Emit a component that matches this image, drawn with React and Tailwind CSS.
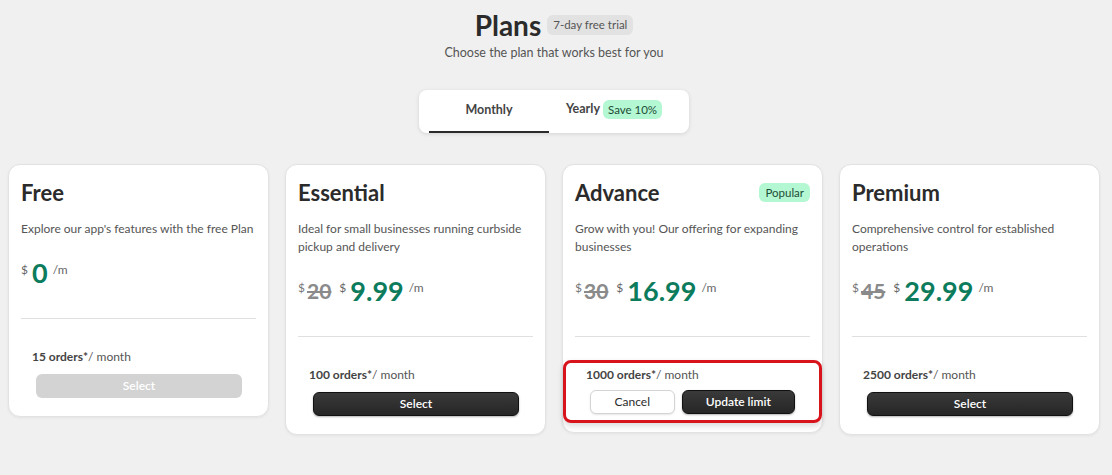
import { useState } from 'react';

const plans = [
    { name: 'Free', desc: "Explore our app's features with the free Plan", price: '0', orders: '15', disabled: true },
    { name: 'Essential', desc: 'Ideal for small businesses running curbside pickup and delivery', old: '20', price: '9.99', orders: '100' },
    { name: 'Advance', desc: 'Grow with you! Our offering for expanding businesses', old: '30', price: '16.99', orders: '1000', popular: true, current: true },
    { name: 'Premium', desc: 'Comprehensive control for established operations', old: '45', price: '29.99', orders: '2500' },
];

const darkBtn = 'h-6 rounded-md border border-[#111] bg-gradient-to-b from-[#3a3a3a] to-[#262626] text-[12px] font-semibold text-white shadow-[0_1px_2px_rgba(0,0,0,0.3)]';

const PlanCard = ({ plan }) => (
    <div className="w-[261px] shrink-0 rounded-xl border border-[#e2e2e2] bg-white pt-3 pb-[9px] shadow-[0_1px_3px_rgba(0,0,0,0.06)]">
        <div className="px-[12px]">
            <div className="flex items-center justify-between h-[32px]">
                <h2 className="text-[22px] font-bold text-[#2b2b2b]">{plan.name}</h2>
                {plan.popular && (
                    <span className="rounded-md bg-[#b4f7d3] px-[6px] py-[1px] text-[11.5px] text-[#1d4d36]">Popular</span>
                )}
            </div>
            <p className="mt-[11px] text-[12px] leading-[18px] text-[#555]">{plan.desc}</p>
            <div className="mt-[13px] flex items-center h-[44px] text-[#2b2b2b]">
                {plan.old && (
                    <>
                        <span className="self-start mt-[10px] text-[12px] text-[#777]">$</span>
                        <span className="ml-[2px] text-[21px] font-bold text-[#8a8a8a] line-through">{plan.old}</span>
                    </>
                )}
                <span className={`self-start mt-[10px] text-[12px] text-[#666] ${plan.old ? 'ml-[8px]' : ''}`}>$</span>
                <span className="ml-[4px] text-[27px] font-bold text-[#0c7c5c]">{plan.price}</span>
                <span className="self-start mt-[10px] ml-[5px] text-[12px] text-[#666]">/m</span>
            </div>
            <div className="mt-[23px] border-t border-[#e0e0e0]" />
        </div>
        <div
            className={`mt-[23px] rounded-lg border-[3px] px-[20px] pt-[3px] pb-[6px] ${plan.current ? 'border-[#d8131b] shadow-[0_3px_6px_rgba(0,0,0,0.15)]' : 'border-transparent'}`}
        >
            <div className="text-[12px] leading-[18px] text-[#555]">
                <span className="font-bold text-[#444]">{plan.orders} orders*</span>/ month
            </div>
            {plan.current ? (
                <div className="mt-[6px] flex gap-[7px] px-[4px]">
                    <button className="h-6 w-[85px] rounded-md border border-[#d4d4d4] bg-white text-[12px] text-[#2b2b2b] shadow-[0_1px_2px_rgba(0,0,0,0.1)]">Cancel</button>
                    <button className={`${darkBtn} w-[114px]`}>Update limit</button>
                </div>
            ) : plan.disabled ? (
                <div className="mt-[6px] px-[4px]">
                    <button className="h-6 w-[206px] rounded-md bg-[#d3d3d3] text-[12px] font-semibold text-white">Select</button>
                </div>
            ) : (
                <div className="mt-[6px] px-[4px]">
                    <button className={`${darkBtn} w-[206px]`}>Select</button>
                </div>
            )}
        </div>
    </div>
);

export default function App() {
    const [tab, setTab] = useState('monthly');

    return (
        <div className="min-h-[475px] bg-[#f0f0f0] pl-2 pr-3 pt-[10px] font-['Lato','Noto_Sans',sans-serif] text-[#2b2b2b]">
            <div className="flex flex-col items-center">
                <div className="flex items-center gap-[6px]">
                    <h1 className="text-[28px] font-bold leading-[30px] text-[#2b2b2b]">Plans</h1>
                    <span className="rounded-md bg-[#e2e2e2] px-[6px] py-[1px] text-[11.5px] text-[#555]">7-day free trial</span>
                </div>
                <p className="mt-[4px] text-[12.5px] text-[#555]">Choose the plan that works best for you</p>

                <div className="mt-[27px] flex h-[43px] w-[270px] rounded-lg bg-white px-[10px] shadow-[0_1px_4px_rgba(0,0,0,0.12)]">
                    <button
                        onClick={() => setTab('monthly')}
                        className={`w-[120px] text-[12.5px] font-bold text-[#444] ${tab === 'monthly' ? 'border-b-2 border-[#2b2b2b]' : ''}`}
                    >
                        Monthly
                    </button>
                    <button onClick={() => setTab('yearly')} className="flex flex-1 items-center justify-center gap-[3px] pb-[4px] text-[12.5px] font-bold text-[#444]">
                        Yearly
                        <span className="rounded-md bg-[#b4f7d3] px-[5px] py-[1px] text-[11.5px] font-normal text-[#1d4d36]">Save 10%</span>
                    </button>
                </div>
            </div>

            <div className="mt-[31px] flex items-start justify-center gap-4">
                {plans.map((p) => (
                    <PlanCard key={p.name} plan={p} />
                ))}
            </div>
        </div>
    );
}
